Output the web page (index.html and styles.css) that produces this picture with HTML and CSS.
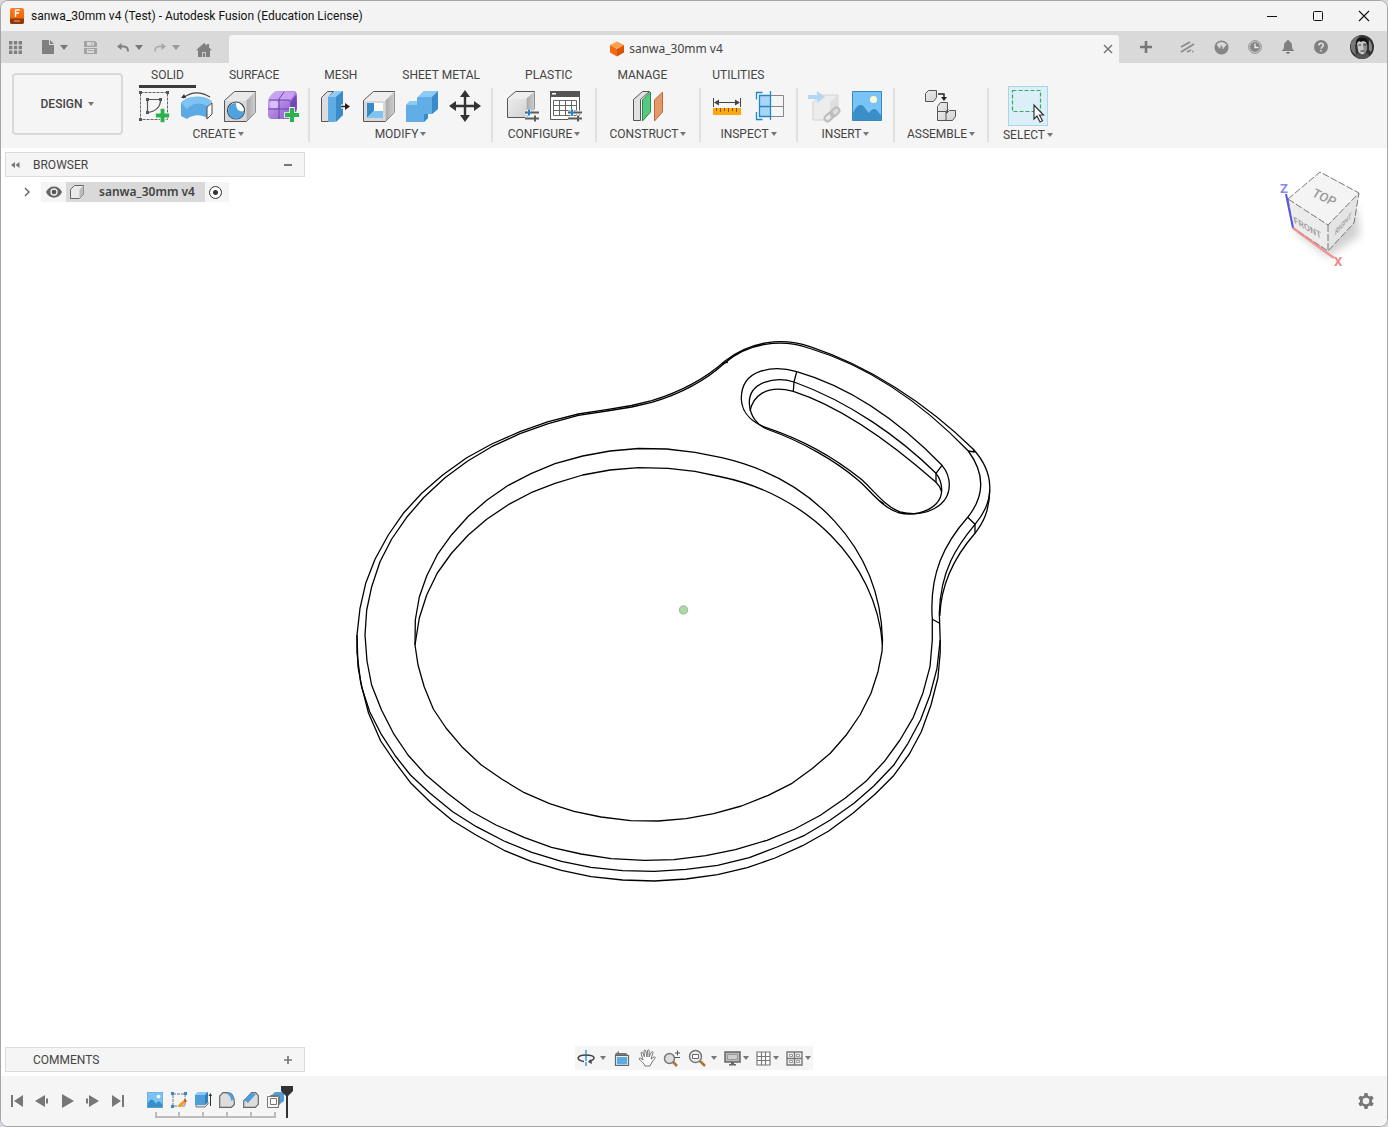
FILE: index.html
```html
<!DOCTYPE html>
<html lang="en">
<head>
<meta charset="utf-8">
<title>sanwa_30mm v4 (Test) - Autodesk Fusion (Education License)</title>
<link rel="stylesheet" href="styles.css">
</head>
<body>
<svg class="defs" aria-hidden="true">
  <defs>
    <linearGradient id="boxFace" x1="0" y1="0" x2="1" y2="1"><stop offset="0" stop-color="#ececec"/><stop offset="1" stop-color="#d2d2d2"/></linearGradient>
    <linearGradient id="boxSide" x1="0" y1="0" x2="1" y2="0"><stop offset="0" stop-color="#a8a8a8"/><stop offset="1" stop-color="#cfcfcf"/></linearGradient>
    <linearGradient id="purple" x1="0" y1="0" x2="1" y2="1"><stop offset="0" stop-color="#d3b5f5"/><stop offset="1" stop-color="#8450c8"/></linearGradient>
    <linearGradient id="orange" x1="0" y1="0" x2="0" y2="1"><stop offset="0" stop-color="#ff7a1a"/><stop offset="1" stop-color="#e85a00"/></linearGradient>
    <filter id="soft" x="-30%" y="-30%" width="160%" height="160%"><feGaussianBlur stdDeviation="4"/></filter>
    <symbol id="plus" viewBox="0 0 14 14"><path d="M4.500 0h5v4.500H14v5H9.500V14h-5V9.500H0v-5h4.500z" fill="#f5f5f5"/><path d="M5.200.8h3.600v4.400h4.400v3.600H8.800v4.400H5.200V8.800H.8V5.200h4.400z" fill="#2bb24c"/></symbol>
    <symbol id="sliders" viewBox="0 0 16 14"><path d="M1 4h14M1 10h14M5 1v6M11 7v6" stroke="#f5f5f5" stroke-width="4"/><path d="M1 4h2M7 4h8M1 10h14M11 7v6" stroke="#5c5c5c" stroke-width="2"/><path d="M5 1v6M2.500 4h5" stroke="#1f83c9" stroke-width="2"/></symbol>
    <symbol id="photo" viewBox="0 0 30 30"><path d="M.5.500h29v29H.5z" fill="#78c4f7" stroke="#3c87bb"/><path d="M1 22c3-6 5-8 8-8s5 5 8 8c2-3 3-4 5-4 3 0 4 3 7 6v5H1z" fill="#3b8fc9"/><circle cx="21.500" cy="8.500" r="3.500" fill="#fdfbd6"/></symbol>
  </defs>
</svg>

<div class="window">
  <header class="titlebar">
    <svg class="app-icon" width="14" height="16" viewBox="0 0 14 16"><rect width="14" height="16" rx="2" fill="url(#orange)"/><path d="M0 10.500h14V14a2 2 0 0 1-2 2H2a2 2 0 0 1-2-2z" fill="#913a08"/><path d="M5.700 2h4M5.700 5h3.300M5.500 1.500V9" stroke="#fff" stroke-width="1.400"/><path d="M4 13h6" stroke="#e9b38d"/></svg>
    <h1 class="title">sanwa_30mm v4 (Test) - Autodesk Fusion (Education License)</h1>
    <div class="window-controls">
      <button aria-label="Minimize"><svg width="12" height="12"><path d="M1 6.500h10" stroke="#111"/></svg></button>
      <button aria-label="Maximize"><svg width="12" height="12"><rect x="1.500" y="1.500" width="9" height="9" rx="1" fill="none" stroke="#111"/></svg></button>
      <button aria-label="Close"><svg width="12" height="12"><path d="M1 1l10 10M11 1L1 11" stroke="#111" stroke-width="1.100"/></svg></button>
    </div>
  </header>

  <div class="tabstrip">
    <div class="quick">
      <button class="apps" aria-label="Show data panel"><svg width="13" height="13" fill="#808080"><path d="M0 0h3.400v3.400H0zM4.800 0h3.400v3.400H4.800zM9.600 0H13v3.400H9.600zM0 4.800h3.400v3.400H0zM4.800 4.800h3.400v3.400H4.800zM9.600 4.800H13v3.400H9.600zM0 9.600h3.400V13H0zM4.800 9.600h3.400V13H4.800zM9.600 9.600H13V13H9.600z"/></svg></button>
      <button class="file" aria-label="File"><svg width="12" height="14" fill="#808080"><path d="M0 0h7v5h5v9H0z"/><path d="M8 0l4 4H8z"/></svg><i class="caret"></i></button>
      <button class="save" aria-label="Save"><svg width="13" height="13"><path d="M0 0h11l2 2v11H0z" fill="#a3a3a3"/><path d="M3 1h7v3.500H3zM3 8h7v4H3z" fill="#d9d9d9"/><path d="M0 6.500h13" stroke="#d9d9d9"/><path d="M4 9.500h5M8 1v3" stroke="#a3a3a3"/></svg></button>
      <button class="undo" aria-label="Undo"><svg width="12" height="9" fill="none" stroke="#808080" stroke-width="2"><path d="M2 3.500h5c3 0 4 2 4 5"/><path d="M0 3.500L4.500 0v7z" fill="#808080" stroke="none"/></svg><i class="caret"></i></button>
      <button class="redo" aria-label="Redo"><svg width="12" height="9" fill="none" stroke="#a8a8a8" stroke-width="1.600"><path d="M10 3.500H5c-3 0-4 2-4 5"/><path d="M12 3.500L7.500 0v7z" fill="#a8a8a8" stroke="none"/></svg><i class="caret pale"></i></button>
      <button class="home" aria-label="Home"><svg width="16" height="14" fill="#808080"><path d="M8 0l3 2.600V1h2v3.400L16 7.200h-2V14H9.800V9H6.200v5H2V7.200H0z"/><path d="M7 10h2v4H7z"/></svg></button>
    </div>
    <div class="doc-tab">
      <div class="doc-name"><svg width="16" height="16"><path d="M8 .5l7 3.500-7 4-7-4z" fill="#ffa04a"/><path d="M1 4l7 4v7.500l-7-4z" fill="#f26a12"/><path d="M15 4L8 8v7.500l7-4z" fill="#d9530a"/></svg><span>sanwa_30mm v4</span></div>
      <button class="doc-close" aria-label="Close document"><svg width="10" height="10"><path d="M1 1l8 8M9 1L1 9" stroke="#777" stroke-width="1.500"/></svg></button>
    </div>
    <div class="account">
      <button class="new" aria-label="New design"><svg width="14" height="14"><path d="M7 1v12M1 7h12" stroke="#777" stroke-width="2.600"/></svg></button>
      <button class="ext" aria-label="Extensions"><svg width="15" height="12" stroke="#8a8a8a" stroke-width="1.700"><path d="M1 6l9-5M1 11L14 3M7 11l4-2M12 10.500h1.500"/></svg></button>
      <button aria-label="Online status"><svg width="15" height="15"><circle cx="7.500" cy="7.500" r="6.300" fill="none" stroke="#858585" stroke-width="1.500"/><path d="M2 4l4 5 1-4 2 3 4-5c2 3 1 7-1 9l-3 2H6l-4-4z" fill="#858585"/><path d="M8.500 9l4-5" stroke="#ddd"/></svg></button>
      <button aria-label="Job status"><svg width="14" height="14"><circle cx="7" cy="7" r="6.300" fill="none" stroke="#858585"/><circle cx="7" cy="7" r="5" fill="#858585"/><path d="M7 3.500V7.500h3.500" fill="none" stroke="#eee" stroke-width="1.300"/></svg></button>
      <button aria-label="Notifications"><svg width="12" height="14" fill="#808080"><path d="M6 0c1 0 1.200.6 1.200 1.200C9.500 2 10 4 10 6c0 3 1 3.500 2 4.500V11H0v-.5C1 9.500 2 9 2 6c0-2 .5-4 2.800-4.800C4.800.6 5 0 6 0zM4 12h4c0 1.300-.8 2-2 2s-2-.7-2-2z"/></svg></button>
      <button aria-label="Help"><svg width="14" height="14"><circle cx="7" cy="7" r="7" fill="#808080"/><path d="M4.800 5.500c0-3 4.500-3 4.500-.3C9.300 7 7 7 7 8.800M7 10v1.600" fill="none" stroke="#e4e4e4" stroke-width="1.500"/></svg></button>
      <button class="avatar" aria-label="Account"><svg width="24" height="24"><circle cx="12" cy="12" r="12" fill="#333"/><path d="M1.500 7c2-4 5-6 8-6L5 11l1 9C1 17-.5 12 1.500 7z" fill="#777"/><path d="M7 8c0-4 9-4 10 0l-.5 7c-1 3-2.500 4.500-4.500 4.500S8.500 18 8 15z" fill="#c8c8c8"/><path d="M13 8h4l-.5 7c-.6 2-1.500 3.500-2.500 4z" fill="#8d8d8d"/><path d="M8.500 10H11M13.500 10H16M10.500 16h3.500" stroke="#333" stroke-width="1.200"/><path d="M6 11C5 3 9 2 12 3c4-1 7 2 5.500 8L16 7l-3-1-2 1-2-1-2 2z" fill="#111"/><path d="M5 21c2-3 4-3 5-3l2 3 3-3c2 0 4 1 4 3-4 4-10 4-14 0z" fill="#555"/><path d="M19 5c3 3 4 8 2 12l-2-2z" fill="#888"/></svg></button>
    </div>
  </div>

  <section class="ribbon">
    <button class="workspace">DESIGN<i class="caret"></i></button>
    <div class="ribbon-main">
      <nav class="modes">
        <a href="#solid" class="active">SOLID</a><a href="#surface">SURFACE</a><a href="#mesh">MESH</a><a href="#sheet">SHEET METAL</a><a href="#plastic">PLASTIC</a><a href="#manage">MANAGE</a><a href="#utilities">UTILITIES</a>
      </nav>
      <div class="groups">
        <div class="group">
          <div class="tools">
            <button aria-label="Create sketch"><svg width="34" height="34"><path d="M3.500 3.500h27v27h-27z" fill="none" stroke="#666" stroke-dasharray="3 1"/><path d="M10.500 10.500v13M11 10.500h12M23.500 11c0 7-5 12-13 12.500" fill="none" stroke="#555" stroke-width="1.200"/><path d="M2 2h3v3H2zM29 2h3v3h-3zM2 29h3v3H2zM9 9h3v3H9zM22 9h3v3h-3zM9 22h3v3H9z" fill="#555"/><use href="#plus" x="18" y="19" width="15" height="15"/></svg></button>
            <button aria-label="Revolve"><svg width="34" height="34"><path d="M1 14c6-8 26-8 31-1l-4 3v14c-5-5-15-5-21 0L1 27z" fill="#5caae4"/><path d="M1 14c6-8 26-8 31-1l-5 4C20 13 13 14 7 20z" fill="#7fc3f3"/><path d="M27 18l5-4v11l-5 5z" fill="#fff" stroke="#444"/><path d="M3 9C12 2 22 3 30 8" fill="none" stroke="#444" stroke-width="1.200"/><path d="M1 9l3-4 2 4z" fill="#333"/></svg></button>
            <button aria-label="Hole"><svg width="34" height="34"><path d="M1.500 11.500l10-9h21v21l-9 9h-22z" fill="#e9e9e9" stroke="#555"/><path d="M23.500 11.500l9-9v21l-9 9z" fill="url(#boxSide)"/><path d="M2 12h21v20H2z" fill="#d8d8d8"/><circle cx="13" cy="21.500" r="8.500" fill="#fff" stroke="#444" stroke-width="1.200"/><path d="M13 14c0 7 3 9 8 8a8 8 0 1 1-8-8z" fill="#4da2df"/></svg></button>
            <button aria-label="Create form"><svg width="34" height="34"><path d="M2 12c0-3 5-9 8-10h17c3 0 4 2 4 4v14c0 3-5 10-8 10H6c-3 0-4-2-4-4z" fill="url(#purple)"/><path d="M3 11c1-3 5-8 8-8h15c3 0 3 2 1 4-2 3-3 4-6 4z" fill="#c8a3f2"/><path d="M25 13c1-3 4-6 5-7 1 4 1 12 0 15-1 2-3 5-5 7z" fill="#7846bd"/><path d="M13 10l5-7M13 10v20M2 20h21c3 0 5-4 7-7M3 11h19c2 0 3 2 3 4v13" fill="none" stroke="#6c41a8"/><rect x="4" y="12" width="8" height="7" rx="2" fill="#d9bffa"/><use href="#plus" x="18" y="18" width="16" height="16"/></svg></button>
          </div>
          <button class="label">CREATE<i class="caret"></i></button>
        </div>
        <div class="group">
          <div class="tools">
            <button aria-label="Press pull"><svg width="34" height="34"><path d="M2.500 8.500l6-6h6l-5 6v24h-7z" fill="#ddd" stroke="#555"/><path d="M9 8l7-6h8v24l-8 7H9z" fill="#5fabe3"/><path d="M9 8l7-6h8l-7 6z" fill="#8acbf7"/><path d="M17 8l7-6v24l-7 7z" fill="#3a8bc7"/><path d="M22 17.500h7" stroke="#fff" stroke-width="4"/><path d="M22 17.500h6" stroke="#222" stroke-width="1.400"/><path d="M26 14l5 3.500-5 3.500z" fill="#222"/></svg></button>
            <button aria-label="Shell"><svg width="34" height="34"><path d="M1.500 11.500l10-9h21v21l-9 9h-22z" fill="#eee" stroke="#555"/><path d="M23.500 11.500l9-9v21l-9 9z" fill="url(#boxSide)"/><path d="M2 12h21v20H2z" fill="#d8d8d8"/><path d="M5 14h16v15H5z" fill="#fff"/><path d="M5 14l7 0v8l-7 7z" fill="#358cc9"/><path d="M5 29l7-7h9v7z" fill="#7fc3f3"/></svg></button>
            <button aria-label="Combine"><svg width="34" height="34"><path d="M1 16l4-4h7V9l7-7h14v18l-6 5h-4v4l-4 4H1z" fill="#61ade5"/><path d="M12 9l7-7h14l-6 6H12zM1 16l4-4h7v4z" fill="#8acbf7"/><path d="M27 8l6-6v18l-6 5zM19 25h4v4l-4 4z" fill="#3a8bc7"/></svg></button>
            <button aria-label="Move"><svg width="34" height="34"><path d="M17 5v24M5 17h24" stroke="#333" stroke-width="2.400"/><path d="M17 1l5 7H12zM17 33l5-7H12zM1 17l7-5v10zM33 17l-7-5v10z" fill="#333"/></svg></button>
          </div>
          <button class="label">MODIFY<i class="caret"></i></button>
        </div>
        <div class="group">
          <div class="tools">
            <button aria-label="Configure"><svg width="34" height="34"><path d="M1.500 9.500l8-7h19v17l-8 9h-19z" fill="#eee" stroke="#555"/><path d="M20.500 9.500l8-7v17l-8 9z" fill="url(#boxSide)"/><path d="M2 10h18v18H2z" fill="url(#boxFace)"/><use href="#sliders" x="18" y="19" width="16" height="15"/></svg></button>
            <button aria-label="Configuration table"><svg width="34" height="34"><path d="M1.500 2.500h29v28h-29z" fill="#fff" stroke="#555"/><path d="M1 2h30v6H1z" fill="#555"/><path d="M3 4h4v1.500H3z" fill="#fff"/><path d="M4.500 11.500h23v15h-23zM4.500 16.500h23M4.500 21.500h23M10.500 11.500v15M16.500 11.500v15M22.500 11.500v15" fill="none" stroke="#666"/><use href="#sliders" x="18" y="19" width="16" height="15"/></svg></button>
          </div>
          <button class="label">CONFIGURE<i class="caret"></i></button>
        </div>
        <div class="group">
          <div class="tools">
            <button aria-label="Offset plane"><svg width="34" height="34"><path d="M2.500 10.500l9-8h7l-9 8v21h-7z" fill="#e1e1e1" stroke="#555"/><path d="M11.500 11l8-8v20l-8 9z" fill="#55c97f" stroke="#288c4b"/><path d="M23.500 11l8-8v20l-8 9z" fill="#e39a68" stroke="#bd6c38"/></svg></button>
          </div>
          <button class="label">CONSTRUCT<i class="caret"></i></button>
        </div>
        <div class="group">
          <div class="tools">
            <button aria-label="Measure"><svg width="34" height="34"><path d="M3.500 9v9M30.500 9v9M5 13.500h24" stroke="#444" fill="none"/><path d="M4 13.500l5-3v6zM30 13.500l-5-3v6z" fill="#444"/><path d="M3 19h28v7H3z" fill="#f9a811"/><path d="M6.500 19v3M10.500 19v4M14.500 19v3M18.500 19v4M22.500 19v3M26.500 19v4" stroke="#865500"/></svg></button>
            <button aria-label="Section analysis"><svg width="34" height="34"><path d="M17.500 6.500h13v21h-13zM17.500 17.500h13" fill="none" stroke="#888"/><path d="M6.500 6.500h11v21h-11z" fill="#a9d6f5"/><path d="M9.500 3.500h-6v7M3.500 23v7.500h6M6 6.500h11M6.500 6v22M6 27.500h11M6 17.500h11M17.500 2v29" fill="none" stroke="#2387c7" stroke-width="1.300"/></svg></button>
          </div>
          <button class="label">INSPECT<i class="caret"></i></button>
        </div>
        <div class="group">
          <div class="tools">
            <button aria-label="Insert derive" disabled><svg width="34" height="34"><path d="M6 13l8-7h17v16l-8 9H6z" fill="#ececec" stroke="#d2d2d2"/><path d="M23 13l8-7v16l-8 9z" fill="#dedede"/><path d="M1 6h9V2l8 6-8 6v-4H1z" fill="#b4d8f1"/><g fill="none" stroke="#bdbdbd" stroke-width="2"><rect x="17" y="25" width="10" height="6" rx="3" transform="rotate(-45 22 28)"/><rect x="23" y="20" width="10" height="6" rx="3" transform="rotate(-45 28 23)"/></g></svg></button>
            <button aria-label="Insert canvas"><svg width="34" height="34"><use href="#photo" x="2" y="2" width="30" height="30"/></svg></button>
          </div>
          <button class="label">INSERT<i class="caret"></i></button>
        </div>
        <div class="group">
          <div class="tools">
            <button aria-label="Joint"><svg width="34" height="34"><g fill="url(#boxFace)" stroke="#555"><path d="M1.500 4.500l3-3h8v7l-3 4h-8z"/><path d="M13.500 17.500l3-4h7v10l-3 7h-7z"/><path d="M22.500 24.500l3-3h6v6l-3 4h-15v-9h9z"/><path d="M13.500 22.500h8l3-2M22 23v8" fill="none"/></g><path d="M14 5h6v4" fill="none" stroke="#222" stroke-width="1.400"/><path d="M17 8h6l-3 4z" fill="#222"/></svg></button>
          </div>
          <button class="label">ASSEMBLE<i class="caret"></i></button>
        </div>
        <div class="group">
          <div class="tools">
            <button class="selected" aria-label="Select"><svg width="38" height="38"><path d="M3.500 3.500h28v21h-28z" fill="none" stroke="#2fae5b" stroke-dasharray="4 2" stroke-width="1.200"/><path d="M25 18v14l3-3 3 6 2.500-1.300-3-5.700h4z" fill="#fff" stroke="#333" stroke-width="1.200"/></svg></button>
          </div>
          <button class="label">SELECT<i class="caret"></i></button>
        </div>
      </div>
    </div>
  </section>

  <main class="viewport">
    <svg class="model" viewBox="1 148 1386 928" fill="none" stroke="#000" stroke-width="1.300" stroke-linejoin="round">
      <path d="M882.500 640L882 651.700 878 671.700 871 693.300 860 715 846 735.300 830.300 753.300 812 768.700 792 783.300 768.200 795.300 741.400 806 713.700 813.700 686 818.700 658.300 821 630.600 820.700 601 817 574 811.300 549.600 803.700 524.300 792.700 502 779.300 481 764.700 461.800 746.700 446 728 433.300 709 424.200 686.700 418 665 415 645 415.300 620 419.300 597 426.700 576 437.300 554.700 451.700 534.700 468.300 516.300 486.700 500.300 508.300 485.300 531 473.700 555 463.700 582.700 456 610 451 638.300 448.500 666.700 449 695 452.300 721.700 457.700C810 478 880 545 882.500 640z"/>
      <path d="M415 645L419.300 618 426.700 595 437.300 573 451.700 553 468.300 535 486.700 519.300 508.300 504.700 531 492.700 555 483.300 582.700 475 610 470 638.300 467.700 668.300 468.300 695 471.300 721.700 477C805 494 876 560 882.500 645"/>
      <path d="M651.700 402.300L631.700 407 606.700 411 578.300 415.300 548.300 423.700 520 433.700 491.700 446.700 467.700 461 445 477.700 424 497.300 406.700 517.300 391.700 539 380 561.700 371.700 586.700 366.700 610 365 635 367 661 371.600 685 381.500 710 393.400 733.300 408 755 426 775 447.500 793.300 471 811.300 496 825 524 837.300 551.500 847.300 581 854 611 858.700 644.500 860.300 674 859.700 705.800 855.700 735.400 849.700 767 840.300 794.700 829 820.400 815.300 845 798.300 866 781.300 885 760.700 900 740 913.300 717.300 923 692.700 930 666.700 932.300 640V619.300C929 573 945 543 967.700 517.300C984 497 986 475 968.300 451C922 403 868 366 810 348.500C781 338 748 343 725 362.700C705 381 680 394 651.700 402.300z"/>
      <path d="M651.700 400.700L631.700 405.500 606.700 409.700 578.300 414 548.300 421.700 520 431.700 491.700 444 466.700 457.700 442.700 475 421.700 493.300 403.300 513.300 388.300 535 375 559.300 365.700 583.300 360 608.300 357 635 358 666.700 362 688.300 369.700 711.700 380.700 733.300 395.400 756 410.400 775 430 793.300 452.700 811.700 476.400 826.700 504 841 531.800 852.300 561.400 861.300 591 867.300 622.700 870.700 654.400 871.300 686 869.300 717.600 865.300 749.300 857.700 777 847 804.600 835.300 830.300 820 854 803.300 873.800 786 893.600 765.300 908 743.300 920.500 720 930 695 937 668.300 940.200 640 939.300 613C940.500 570 957 546 975 524.300C996 500 994 472 973.300 449.300C925 402 868 366 810 346.700C781 336.500 750 342 725 361C705 379 680 392 651.700 400.700z"/>
      <polyline points="357,635 357,653 360.600,682 368.500,713 380.700,741 395.400,762.700 411,783.300 431,802.700 452.700,820.700 476.400,835.300 504,850.300 531.800,861.700 561.400,870.300 591,876.700 622.700,880 654.400,881 686,879 717.600,874.700 747.300,867.700 775,858 802.600,845.700 828.300,831.300 852.900,813.300 875,794.300 893.600,775.700 909.400,754 921.300,731.700 931,705 937.900,678 940.200,653 940.200,640"/>
      <path d="M989.700 490C989.700 512 982 524 975 533.300C957 554 941 580 939.800 616"/>
      <path d="M968.300 451l6 1-1-3M967.700 517.300l7.300 7v9M932.300 619.300l7.400 4M722 363.500l6-1.500"/>
      <path d="M796.700 371.700C775 365 741 368 741.300 399C742 415 755 424 768.300 428.300C803 440 836 459 860 478.300C871 487 885 507 900 511.800C924 518 949 507 949.300 485C949.300 478 946 470 942 465.300C900 422 850 387 796.700 371.700z"/>
      <path d="M794 382C775 376 749 382 749.300 403C750 417 758 426 768 429.500C803 442 836 461 858 480C869 489 881 507 898 512.500C920 518 941.500 507 941.700 490C941.700 483 939 477 936 473.300C900 438 850 402 794 382z"/>
      <path d="M750 411C753 397 765 384 793.300 391.300C845 408 895 446 936 482.300Q940 486 941.700 491.700"/>
      <path d="M796.700 371.700L794 382l-.7 9.300M942 465.300l-6 8v9M880 501l4 3"/>
      <circle cx="683.500" cy="610" r="4" fill="#a8dca4" stroke="#aebcab" stroke-width="1.500"/>
    </svg>

    <section class="browser">
      <div class="panel browser-head">
        <button aria-label="Collapse browser"><svg width="9" height="6" fill="#777"><path d="M4 0v6L0 3zM8.500 0v6l-4-3z"/></svg></button>
        <h2>BROWSER</h2>
        <button aria-label="Minimize browser"><svg width="8" height="8"><path d="M0 4h8" stroke="#777" stroke-width="2"/></svg></button>
      </div>
      <div class="tree-row">
        <button class="expand" aria-label="Expand"><svg width="6" height="10" fill="none" stroke="#555" stroke-width="1.200"><path d="M1 1l4 4-4 4"/></svg></button>
        <button class="eye" aria-label="Visibility"><svg width="16" height="12"><path d="M0 6c3-7.500 13-7.500 16 0-3 7.500-13 7.500-16 0z" fill="#666"/><circle cx="8" cy="6" r="3.700" fill="#eee"/><circle cx="8" cy="6" r="2.300" fill="#555"/></svg></button>
        <div class="node"><svg width="14" height="14"><path d="M.5 4.500l4-4h9v9l-4 4h-9z" fill="#e9e9e9" stroke="#666"/><path d="M9.500 4.500l4-4v9l-4 4z" fill="#bbb"/></svg><span>sanwa_30mm v4</span></div>
        <label class="activate"><input type="radio" checked aria-label="Activate component"></label>
      </div>
    </section>

    <svg class="viewcube" width="90" height="106" viewBox="1275 166 90 106" role="img" aria-label="View cube">
      <path d="M1293 230l35 27 32-22-4-28z" fill="#bbb" opacity=".7" filter="url(#soft)"/>
      <path d="M1288 199l40 26v26l-35-23z" fill="#ececec"/><path d="M1328 225l31-32-5 30-26 28z" fill="#e4e4e4"/><path d="M1320 172l39 21-31 32-40-26z" fill="#f4f4f4"/>
      <path d="M1288 199l32-27 39 21-31 32zM1328 225v26M1288 199l5 29 35 23 26-28 5-30" fill="none" stroke="#777" stroke-dasharray="7 2"/>
      <path d="M1286 194l7 34" stroke="#5555df" stroke-width="2" fill="none"/><path d="M1293 228l41 30" stroke="#ee8888" stroke-width="2.500" opacity=".85" fill="none"/>
      <g class="cube-faces"><text transform="matrix(.88 .42 -.5 .82 1322 201)" font-size="13">TOP</text><text transform="matrix(.86 .5 .16 .95 1308 231)" font-size="10">FRONT</text><text transform="matrix(.64 -.7 -.1 1 1343 227)" font-size="9">RIGHT</text></g>
      <g class="cube-axes"><text x="1280" y="193" fill="#8a8af0">Z</text><text x="1334" y="266" fill="#ef8585">X</text></g>
    </svg>

    <section class="panel comments"><h2>COMMENTS</h2><button aria-label="Add comment"><svg width="8" height="8"><path d="M0 4h8M4 0v8" stroke="#777" stroke-width="1.700"/></svg></button></section>

    <div class="navbar">
      <button class="wide" aria-label="Orbit"><svg width="18" height="18"><path d="M9 1v4M9 6v6M9 13v4" stroke="#63b1e5" stroke-width="2"/><path d="M7 12.500C-2 11 0 6 9 6s11 4 3 6.500" fill="none" stroke="#444" stroke-width="1.500"/><path d="M14 10l-3 3 4 2z" fill="#444"/></svg><i class="caret"></i></button>
      <button aria-label="Look at"><svg width="18" height="18"><path d="M2.500 6.500h13v10h-13z" fill="#eee" stroke="#666" stroke-width="1.200"/><path d="M4 8h10v7.500H4z" fill="#5aace5"/><path d="M2 5l4-3v2h7l2 2H2z" fill="#777"/></svg></button>
      <button aria-label="Pan"><svg width="18" height="18" viewBox="0 0 18 18"><path d="M7 17c-1-3-4-5-6-7 0-1 1-1 2-.5l2 1.500L3 4c0-1 1.500-1.200 2 0l1.500 4L6 2c0-1.200 1.600-1.300 1.800 0L9 8l.5-6.500c.2-1 1.700-1 1.700.2L11 8l2.500-5c.5-1 1.800-.5 1.500.6L13 10l3-2c1-.5 1.800.4 1 1.300L14 13l-2 4z" fill="#fff" stroke="#777"/></svg></button>
      <button aria-label="Zoom"><svg width="19" height="18"><circle cx="6.500" cy="9.500" r="5" fill="#ddd" stroke="#777" stroke-width="1.500"/><path d="M10 13l4 4" stroke="#a87632" stroke-width="2.500"/><path d="M12 4h5M14.500 1.500v5M12 8.500h5" stroke="#555"/></svg></button>
      <button class="wide" aria-label="Fit"><svg width="18" height="18"><circle cx="7.500" cy="7.500" r="6" fill="#eee" stroke="#777" stroke-width="1.500"/><path d="M4.500 5.500h6v4h-6z" fill="#fff" stroke="#666"/><path d="M12 12l5 5" stroke="#a87632" stroke-width="2.500"/></svg><i class="caret"></i></button>
      <button aria-label="Display settings"><svg width="17" height="16"><path d="M1 2h15v10H1z" fill="#bbb" stroke="#666" stroke-width="1.500"/><path d="M3.500 4.500h10v5h-10z" fill="#ccc" stroke="#999"/><path d="M7 12h3v2h2v1.500H5V14h2z" fill="#666"/></svg><i class="caret"></i></button>
      <button aria-label="Grid and snaps"><svg width="15" height="15"><path d="M1 1h13v13H1zM1 5.500h13M1 9.500h13M5.500 1v13M9.500 1v13" fill="#fff" stroke="#777" stroke-width="1.200"/></svg><i class="caret"></i></button>
      <button aria-label="Viewports"><svg width="17" height="15"><path d="M1 1h15v13H1zM8.500 1v13M1 7.500h15" fill="#eee" stroke="#777" stroke-width="1.400"/><path d="M3.500 3.500h3v2h-3zM10.500 3.500h3v2h-3zM3.500 9.500h3v2h-3zM10.500 9.500h3v2h-3z" fill="#fff" stroke="#999"/></svg><i class="caret"></i></button>
    </div>
  </main>

  <footer class="timeline">
    <div class="playback">
      <button aria-label="Go to start"><svg width="12" height="14" fill="#777"><path d="M0 1h2v12H0zM12 1v12L3 7z"/></svg></button>
      <button aria-label="Step back"><svg width="14" height="14" fill="#777"><path d="M10 1v12L0 7zM11 4.500h2v5h-2z"/></svg></button>
      <button aria-label="Play"><svg width="14" height="16" fill="#777"><path d="M1 1l12 7-12 7z"/></svg></button>
      <button aria-label="Step forward"><svg width="14" height="14" fill="#777"><path d="M3 1v12l10-6zM0 4.500h2v5H0z"/></svg></button>
      <button aria-label="Go to end"><svg width="12" height="14" fill="#777"><path d="M10 1h2v12h-2zM0 1v12l9-6z"/></svg></button>
    </div>
    <div class="history">
      <div class="features">
        <button aria-label="Canvas"><svg width="16" height="16"><use href="#photo" width="16" height="16"/></svg></button>
        <button aria-label="Sketch"><svg width="16" height="16"><path d="M2 2h12v12H2z" fill="none" stroke="#777" stroke-dasharray="3 1"/><path d="M0 0h3v3H0zM13 0h3v3h-3zM0 13h3v3H0z" fill="#2d8ccb"/><path d="M7 15l1-3 5-4 2 2-5 5z" fill="#f3a021"/><path d="M12.500 8.500L14 7l2 2-1.500 1.500z" fill="#d94545"/></svg></button>
        <button aria-label="Extrude"><svg width="17" height="16"><path d="M1 12v3h9l3-3v-2" fill="#ddd" stroke="#777"/><path d="M0 3l3-3h10v10l-3 3H0z" fill="#4d9fda"/><path d="M0 3l3-3h10l-3 3z" fill="#8acbf7"/><path d="M10 3l3-3v10l-3 3z" fill="#317fb8"/><path d="M15.500 2v12" stroke="#333"/><path d="M13.500 4l2-3 1.500 3z" fill="#333"/></svg></button>
        <button aria-label="Fillet"><svg width="16" height="16"><path d="M.7 15.300V4L4 .7h4c5 0 7.300 4 7.300 9v3l-3 2.600z" fill="#ddd" stroke="#666" stroke-width="1.200"/><path d="M6 1c4 1 6 4 6 8l3-2C15 3 12 0 6 1z" fill="#4d9fda"/></svg></button>
        <button aria-label="Chamfer"><svg width="16" height="16"><path d="M.7 15.300V9l8-8.300h4l2.600 3v8.600l-3 3z" fill="#ddd" stroke="#666" stroke-width="1.200"/><path d="M1 8l7-7 5 1-8 9z" fill="#4d9fda"/></svg></button>
        <button aria-label="Offset"><svg width="17" height="16"><path d="M5 3l3-3h9v9l-4 3H5z" fill="#4d9fda"/><path d="M3.500 3.500h9v9h-9z" fill="#fff" stroke="#777"/><path d="M.5 4.500h11v11H.5z" fill="#f6f6f6" stroke="#777"/><path d="M3.500 6.500h6v6h-6z" fill="#fff" stroke="#777"/></svg></button>
      </div>
      <svg class="track" width="122" height="8" fill="none" stroke="#bbb" stroke-width="2"><path d="M1 1v5h119V1M24 1v5M48 1v5M72 1v5M96 1v5"/></svg>
      <svg class="marker" width="14" height="32" fill="#333"><path d="M1 0h12v5L8 10v22H6V10L1 5z"/></svg>
    </div>
    <button class="settings" aria-label="Timeline settings"><svg width="16" height="16"><path d="M6.500 0h3l.5 2.500 1.500 1L14 2.700 15.700 5.500 14 7v2l1.700 1.500L14 13.300l-2.500-.8-1.500 1L9.500 16h-3L6 13.500l-1.500-1L2 13.300.3 10.500 2 9V7L.3 5.500 2 2.700l2.500.8L6 2.500z" fill="#777"/><circle cx="8" cy="8" r="3.300" fill="#f3f3f3"/></svg></button>
  </footer>
</div>
</body>
</html>
```

FILE: styles.css
```css
* { box-sizing: border-box; }

body {
  margin: 0;
  background: #d5d9df;
  color: #444;
  font: 12px/16px Roboto, "Noto Sans", sans-serif;
}

svg { display: block; flex: none; }
.defs { position: absolute; width: 0; height: 0; }

button {
  display: flex;
  align-items: center;
  justify-content: center;
  padding: 0;
  border: 0;
  background: none;
  color: inherit;
  font: inherit;
}

h1, h2 { margin: 0; font: inherit; }
a { color: inherit; text-decoration: none; }

.caret {
  flex: none;
  margin-left: 2px;
  border: 3px solid transparent;
  border-top: 4px solid #777;
  border-bottom: 0;
}
.caret.pale { border-top-color: #999; }

.window {
  display: flex;
  flex-direction: column;
  min-height: 100vh;
  border: 1px solid #a5a5a5;
  border-radius: 8px;
  overflow: hidden;
  background: #fff;
}

/* Title bar */
.titlebar {
  display: flex;
  align-items: center;
  height: 30px;
  padding-left: 9px;
  background: #f3f3f3;
}
.title {
  flex: 1;
  margin-left: 7px;
  color: #111;
}
.window-controls { display: flex; }
.window-controls button { width: 46px; height: 28px; }

/* Quick access bar and document tab */
.tabstrip {
  display: flex;
  height: 32px;
  background: #d9d9d9;
}
.quick {
  display: flex;
  align-items: center;
  width: 228px;
  padding-left: 8px;
}
.file { margin-left: 20px; }
.file .caret, .undo .caret, .redo .caret { margin-left: 6px; border-width: 5px 4px 0; }
.save { margin-left: 16px; }
.undo { margin-left: 20px; }
.redo { margin-left: 11px; }
.home { margin: 6px 0 0 16px; }
.doc-tab {
  display: flex;
  flex: 1;
  align-items: center;
  margin-top: 4px;
  padding-right: 6px;
  border-radius: 3px 3px 0 0;
  background: #f5f5f5;
}
.doc-name {
  display: flex;
  flex: 1;
  align-items: center;
  justify-content: center;
  gap: 4px;
  font: 12px/16px "Noto Sans", sans-serif;
}
.account {
  display: flex;
  align-items: center;
  width: 268px;
  padding-left: 3px;
}
.account button { width: 33px; }
.account .new { width: 47px; }
.account .ext { width: 36px; }
.account .avatar { width: 50px; }

/* Ribbon */
.ribbon {
  display: flex;
  height: 85px;
  padding-left: 11px;
  background: #f5f5f5;
}
.workspace {
  width: 111px;
  height: 62px;
  margin-top: 10px;
  border: 2px solid #d9d9d9;
  border-radius: 4px;
  font-weight: 500;
}
.workspace .caret { margin-left: 6px; }
.ribbon-main { margin-left: 10px; }
.modes {
  display: flex;
  gap: 21px;
  height: 25px;
  padding: 4px 0 0 6px;
}
.modes a { padding: 0 12px; }
.modes .active { border-bottom: 3px solid #3c3c3c; }
.groups {
  display: grid;
  grid-template-columns: 177px 183px 104px 104px 97px 97px 94px 78px;
}
.group {
  display: flex;
  flex-direction: column;
  align-items: center;
  height: 54px;
  border-right: 2px solid #e0e0e0;
}
.group:first-child { padding-right: 5px; }
.group:last-child { border-right: 0; }
.tools { display: flex; height: 36px; align-items: center; }
.tools button { width: 43px; }
.tools .selected {
  width: 40px;
  height: 40px;
  border: 1px solid #a6d5ee;
  background: #dceef7;
}
.label { margin-top: 3px; }

/* Viewport */
.viewport {
  position: relative;
  flex: 1;
  min-height: 400px;
  background: #fff;
}
.model {
  position: absolute;
  inset: 0;
  width: 100%;
  height: 100%;
}
.panel {
  display: flex;
  align-items: center;
  width: 300px;
  height: 25px;
  padding-right: 12px;
  border: 1px solid #dcdcdc;
  background: #f5f5f5;
}
.panel h2 { flex: 1; padding-top: 1px; }
.browser { position: absolute; top: 4px; left: 4px; }
.browser-head { padding-left: 5px; }
.browser-head h2 { margin-left: 13px; }
.tree-row {
  display: flex;
  align-items: center;
  height: 20px;
  margin-top: 5px;
}
.expand { width: 36px; padding-left: 8px; }
.eye { width: 25px; height: 20px; background: #f5f5f5; }
.node {
  display: flex;
  align-items: center;
  gap: 15px;
  height: 20px;
  padding: 0 10px 0 4px;
  background: #d9d9d9;
  font: 600 12px/16px "Noto Sans", sans-serif;
}
.activate {
  display: flex;
  align-items: center;
  height: 20px;
  padding: 0 7px 0 4px;
  background: #f5f5f5;
}
.activate input {
  appearance: none;
  width: 13px;
  height: 13px;
  margin: 0;
  border: 1px solid #333;
  border-radius: 50%;
  background: radial-gradient(circle, #333 2px, #fff 3px);
}
.viewcube { position: absolute; top: 18px; right: 22px; font-weight: 500; }
.cube-faces { fill: #999; text-anchor: middle; }
.cube-axes { font-size: 13px; font-weight: 700; }
.comments { position: absolute; bottom: 4px; left: 4px; padding-left: 27px; }
.navbar {
  position: absolute;
  bottom: 6px;
  left: 50%;
  display: flex;
  justify-content: space-between;
  align-items: center;
  width: 238px;
  height: 24px;
  padding: 0 2px;
  background: #f5f5f5;
  transform: translateX(-50%);
}
.navbar .wide .caret { margin-left: 5px; }

/* Timeline */
.timeline {
  display: flex;
  height: 50px;
  padding: 0 13px 0 10px;
  background: #f5f5f5;
}
.playback {
  display: flex;
  align-items: center;
  justify-content: space-between;
  width: 113px;
}
.history { position: relative; flex: 1; padding: 16px 0 0 23px; }
.features { display: flex; gap: 8px; }
.features button { width: 16px; }
.track { margin: 3px 0 0 8px; }
.marker { position: absolute; top: 10px; left: 156px; }
```
